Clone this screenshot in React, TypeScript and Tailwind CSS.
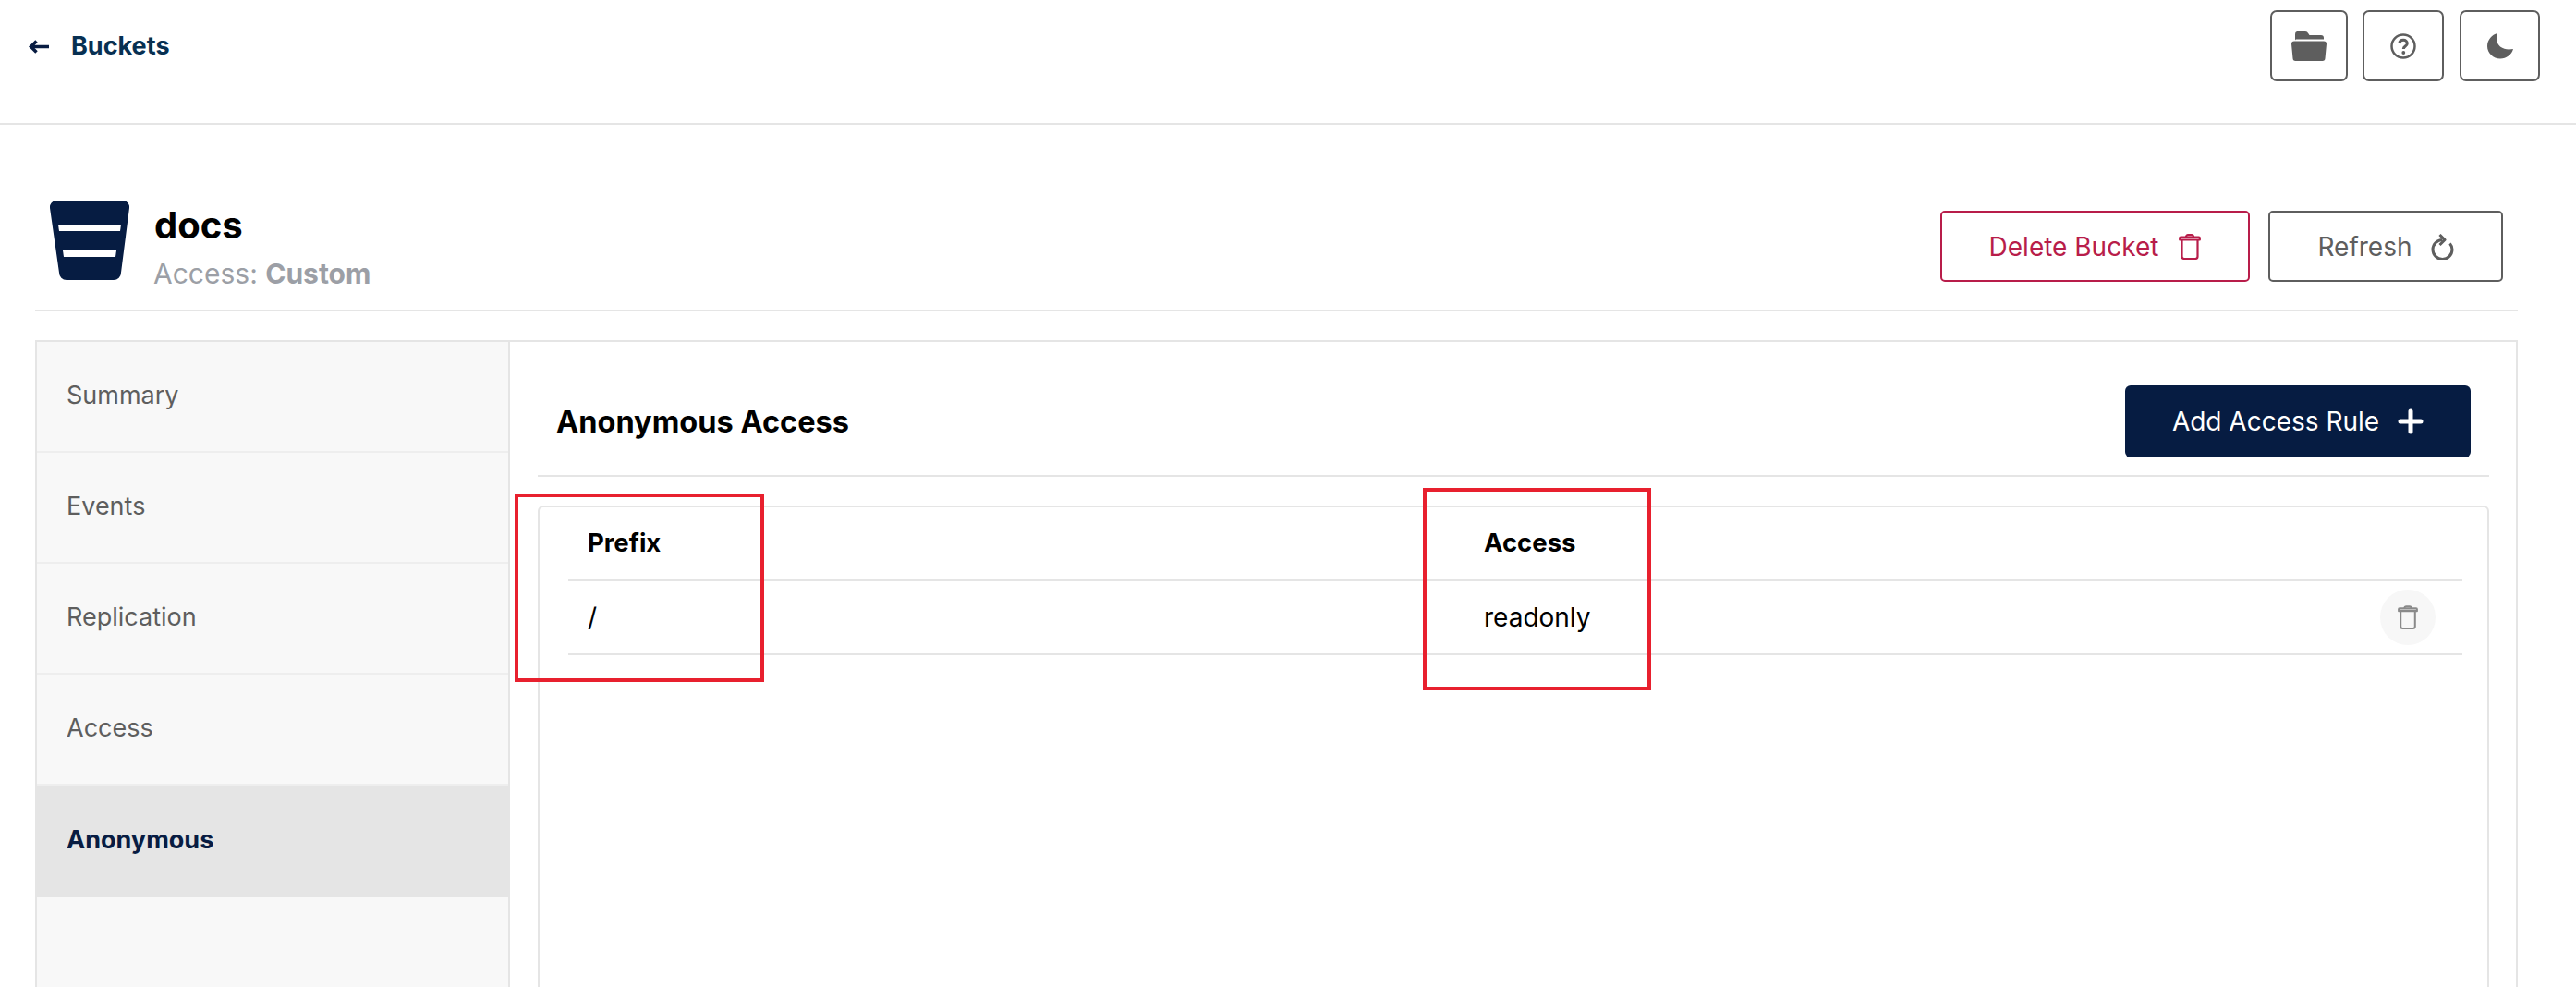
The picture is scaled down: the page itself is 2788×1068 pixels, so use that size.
const tabs = ["Summary", "Events", "Replication", "Access"];

function TrashIcon({ className }: { className: string }) {
  return (
    <svg viewBox="0 0 24 28" fill="none" stroke="currentColor" strokeWidth="2.200" className={className}>
      <path d="M8 3.500c0-1.500 1-2.300 2-2.300h4c1 0 2 .8 2 2.300" />
      <path d="M1.200 6.500V4.500c0-.6.4-1 1-1h19.600c.6 0 1 .4 1 1v2z" strokeLinejoin="round" />
      <path d="M3.500 6.500v18a2.500 2.500 0 0 0 2.500 2.500h12a2.500 2.500 0 0 0 2.500-2.500v-18" />
    </svg>
  );
}

function IconButton({ children, width }: { children: React.ReactNode; width: string }) {
  return (
    <button className={`flex h-[77px] items-center justify-center rounded-[7px] border-2 border-[#5e5e5e] text-[#5e5e5e] ${width}`}>
      {children}
    </button>
  );
}

export default function App() {
  return (
    <div className="relative h-[1068px] w-[2788px] overflow-hidden bg-white font-['Inter',sans-serif]">
      <header className="flex h-[135px] items-start justify-between border-b-2 border-[#e5e5e5] pl-[31px] pr-[39px] pt-[11px]">
        <a className="flex h-[77px] items-center gap-[24px] pt-[2px] text-[27px] font-bold text-[#073052]">
          <svg viewBox="0 0 22 15" className="h-[15px] w-[22px] text-[#081c42]" fill="none" stroke="currentColor" strokeWidth="3.500">
            <path d="M22 7.500H3" />
            <path d="M8.500 1.500 2.500 7.500l6 6" />
          </svg>
          Buckets
        </a>
        <div className="flex gap-[16px]">
          <IconButton width="w-[84px]">
            <svg viewBox="0 0 38 32" className="h-[32px] w-[38px]" fill="currentColor">
              <path d="M6 0h9c1.500 0 2.500.8 3.500 2.500L19.500 4H32a3 3 0 0 1 3 3v1.500H5.500c-1 0-1.500.5-1.500 1.500V3a3 3 0 0 1 2-3z" />
              <path d="M3 10.500h32a3 3 0 0 1 3 3l-1.500 15.500a3 3 0 0 1-3 3h-29a3 3 0 0 1-3-3L0 13.500a3 3 0 0 1 3-3z" />
            </svg>
          </IconButton>
          <IconButton width="w-[88px]">
            <svg viewBox="0 0 28 28" className="h-[28px] w-[28px]" fill="none" stroke="currentColor" strokeWidth="2.500">
              <circle cx="14" cy="14" r="12.500" />
              <path d="M9.800 11c.3-2.500 2-3.700 4.300-3.700 2.500 0 4.200 1.500 4.200 3.600 0 3-4 3.200-4 6" strokeWidth="3" />
              <circle cx="14.300" cy="21" r="1.900" fill="currentColor" stroke="none" />
            </svg>
          </IconButton>
          <IconButton width="ml-px w-[87px]">
            <svg viewBox="0 0 28 28" className="h-[28px] w-[28px]" fill="currentColor">
              <path d="M11 0C9 5 10 11 14 14.500 18 17.500 23 18 28 17c-1.500 6-7.500 10.500-14 10.500C6.500 27.500 0 21.500 0 14 0 7 5 1.500 11 0z" />
            </svg>
          </IconButton>
        </div>
      </header>

      <main className="pl-[38px] pr-[63px]">
        <section className="flex justify-between border-b-2 border-[#e5e5e5] pb-[30px] pl-[16px] pr-[16px] pt-[82px]">
          <div className="flex h-[86px] gap-[27px]">
            <svg viewBox="0 0 86 86" className="h-[86px] w-[86px]">
              <path d="M7 0h72a7 7 0 0 1 7 8l-9 70a8 8 0 0 1-8 8H18a8 8 0 0 1-8-8L0 8a7 7 0 0 1 7-8z" fill="#061c42" />
              <path d="M9 26h68l-1 7H10z" fill="#fff" />
              <path d="M14 54h58l-1 7H15z" fill="#fff" />
            </svg>
            <div className="pt-[5px]">
              <h1 className="text-[40px] font-bold leading-[44px] text-black">docs</h1>
              <p className="-ml-px mt-[14px] text-[30px] leading-[32px] text-[#9c9fa6]">
                Access: <span className="font-bold">Custom</span>
              </p>
            </div>
          </div>
          <div className="mt-[11px] flex gap-[20px]">
            <button className="flex h-[77px] w-[335px] items-center justify-center gap-[22px] rounded-[5px] border-2 border-[#b81d4a] text-[28px] text-[#b81d4a]">
              Delete Bucket
              <TrashIcon className="h-[28px] w-[24px]" />
            </button>
            <button className="flex h-[77px] w-[254px] items-center justify-center gap-[20px] rounded-[5px] border-2 border-[#5e5e5e] text-[28px] text-[#5e5e5e]">
              Refresh
              <svg viewBox="0 0 25 28" className="h-[28px] w-[25px]" fill="none" stroke="currentColor" strokeWidth="3">
                <path d="M12.500 6.500a10.500 10.500 0 1 0 10.500 10.500 10 10 0 0 0-2.500-6.500" />
                <path d="M9.500 1l5.500 5.500-5.500 5.500" strokeLinejoin="round" />
              </svg>
            </button>
          </div>
        </section>

        <section className="mt-[31px] flex h-[800px] border-2 border-[#e5e5e5]">
          <nav className="w-[512px] shrink-0 border-r-2 border-[#e5e5e5] bg-[#f8f8f8] text-[27px] text-[#5e5e5e]">
            {tabs.map((tab) => (
              <div key={tab} className="flex h-[120px] items-center border-b-2 border-[#eeeeee] pb-[2px] pl-[32px]">
                {tab}
              </div>
            ))}
            <div className="flex h-[121px] items-center bg-[#e5e5e5] pb-[2px] pl-[32px] font-bold text-[#081c42]">Anonymous</div>
          </nav>

          <div className="flex min-w-0 flex-1 flex-col pl-[30px] pr-[29px]">
            <div className="flex items-center justify-between border-b-2 border-[#e5e5e5] pb-[19px] pl-[20px] pr-[20px] pt-[47px]">
              <h2 className="mt-[3px] text-[32.500px] font-bold text-black">Anonymous Access</h2>
              <button className="flex h-[78px] w-[374px] items-center justify-center gap-[20px] rounded-[6px] bg-[#061c42] text-[28px] text-white">
                Add Access Rule
                <svg viewBox="0 0 28 28" className="h-[28px] w-[28px]" fill="none" stroke="currentColor" strokeWidth="5" strokeLinecap="round">
                  <path d="M14 3v22M3 14h22" />
                </svg>
              </button>
            </div>

            <div className="mt-[31px] flex-1 rounded-[6px] border-2 border-[#e5e5e5] pl-[31px] pr-[27px] text-[28px] text-black">
              <div className="flex h-[80px] items-center border-b-2 border-[#e5e5e5] text-[27.500px] font-bold">
                <div className="w-[971px] pl-[21px]">Prefix</div>
                <div className="pl-[20px]">Access</div>
              </div>
              <div className="flex h-[80px] items-center border-b-2 border-[#e5e5e5]">
                <div className="w-[971px] pl-[21px]">/</div>
                <div className="flex-1 pl-[20px]">readonly</div>
                <button className="mr-[29px] flex h-[60px] w-[60px] items-center justify-center rounded-full bg-[#f7f7f7] text-[#8a8a8a]">
                  <TrashIcon className="h-[26px] w-[22px]" />
                </button>
              </div>
            </div>
          </div>
        </section>
      </main>

      <div className="absolute left-[557px] top-[534px] h-[204px] w-[270px] border-4 border-[#e8202e]" />
      <div className="absolute left-[1540px] top-[528px] h-[219px] w-[247px] border-4 border-[#e8202e]" />
    </div>
  );
}
